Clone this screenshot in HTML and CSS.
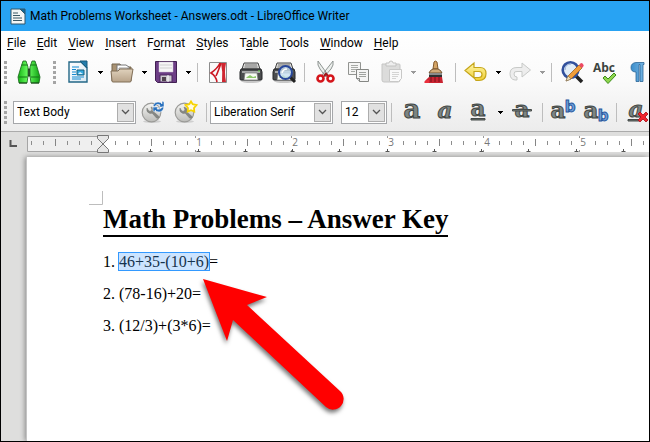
FILE: index.html
```html
<!DOCTYPE html>
<html lang="en">
<head>
<meta charset="utf-8">
<title>Math Problems Worksheet - Answers.odt - LibreOffice Writer</title>
<link rel="stylesheet" href="styles.css">
</head>
<body>
<svg class="defs" width="0" height="0" aria-hidden="true">
  <defs>
    <linearGradient id="green" x1="0" x2="1" y1="0" y2="0"><stop offset="0" stop-color="#16b516"/><stop offset=".45" stop-color="#6cff62"/><stop offset="1" stop-color="#0f9f12"/></linearGradient>
    <linearGradient id="paper" x1="0" x2="1" y1="0" y2="1"><stop offset="0" stop-color="#fff"/><stop offset="1" stop-color="#d9e9f3"/></linearGradient>
    <linearGradient id="tan" x1="0" x2="0" y1="0" y2="1"><stop offset="0" stop-color="#e0d2bd"/><stop offset="1" stop-color="#b8a389"/></linearGradient>
    <linearGradient id="gold" x1="0" x2="0" y1="0" y2="1"><stop offset="0" stop-color="#fff6a8"/><stop offset="1" stop-color="#f0cf35"/></linearGradient>
    <linearGradient id="metal" x1="0" x2="0" y1="0" y2="1"><stop offset="0" stop-color="#f6f6f4"/><stop offset="1" stop-color="#bcbcb9"/></linearGradient>
    <linearGradient id="pilcrow" x1="0" x2="1" y1="0" y2="0"><stop offset="0" stop-color="#3b8dcb"/><stop offset="1" stop-color="#77b6e3"/></linearGradient>
    <symbol id="caret" viewBox="0 0 5 3"><path d="M0 0h5v1H4v1H3v1H2V2H1V1H0z" fill="currentColor"/></symbol>
    <symbol id="chevron" viewBox="0 0 9 6"><path d="M1 1l3.500 3.500L8 1" fill="none" stroke="#555" stroke-width="1.300"/></symbol>
    <symbol id="printer" viewBox="0 0 24 24">
      <ellipse cx="12" cy="21" rx="10" ry="2" fill="#0003"/>
      <path d="M5 3h14l2 6H3z" fill="#dadad8" stroke="#444"/><path d="M6 5h12M5.500 7h13" stroke="#777"/>
      <path d="M2 9h20l1 3v7q0 1-1 1H2q-1 0-1-1v-7z" fill="#4b4d4e" stroke="#252628"/>
      <path d="M3 11h18v2H3z" fill="#a7a9a9"/><path d="M6 13h12l1 7H5z" fill="#f8fbf5" stroke="#777" stroke-width=".7"/>
      <path d="M8 17l3-2 3 2 3-1v2H7z" fill="#8ec96c"/><path d="M19 11h2" stroke="#6fe04c"/>
    </symbol>
    <symbol id="wrench" viewBox="0 0 24 24">
      <ellipse cx="11" cy="21.500" rx="9" ry="1.500" fill="#0002"/>
      <circle cx="10.500" cy="12.500" r="9.300" fill="url(#metal)" stroke="#9b9b98" stroke-width="1.200"/>
      <path d="M6 8q-1 4 2 5 2 1 3 0l4.500 5q2 1 3-1L13 12q1-4-3-5l1 3-2 1.500-2-1.500z" fill="#858783" stroke="#767874" stroke-width=".5"/>
    </symbol>
  </defs>
</svg>

<main class="window">
  <header class="titlebar">
    <svg width="16" height="17" viewBox="0 0 16 17" aria-hidden="true"><path d="M1 1h9l5 5v10H1z" fill="#f4f6f5" stroke="#31566a"/><path d="M10 1h5v5z" fill="#116d9e" stroke="#31566a"/><path d="M3 5h5M3 7.500h7M3 10h9M3 12.500h9" stroke="#3c5965" stroke-width="1.200"/></svg>
    <h1>Math Problems Worksheet - Answers.odt - LibreOffice Writer</h1>
  </header>

  <div class="chrome">
    <nav class="menu" aria-label="Main menu">
      <button><u>F</u>ile</button><button><u>E</u>dit</button><button><u>V</u>iew</button><button><u>I</u>nsert</button><button>F<u>o</u>rmat</button><button><u>S</u>tyles</button><button>T<u>a</u>ble</button><button><u>T</u>ools</button><button><u>W</u>indow</button><button><u>H</u>elp</button>
    </nav>

    <div class="toolbar" role="toolbar" aria-label="Standard">
      <span class="grip"></span>
      <button class="tool" aria-label="Find"><svg viewBox="0 0 24 24"><path d="M9 9h6v7H9z" fill="#3b433b" stroke="#1d271d"/><path d="M5 4l1-3h3l1 3 1 3v9l-1 7H2l-1-6L4 7zM14 4l1-3h3l1 3 1 3 3 10-1 6h-8l-1-7V7z" fill="url(#green)" stroke="#176519" stroke-width=".8"/><path d="M4.500 5h6M13.500 5h6M2 17h8M14 17h8" stroke="#157617"/><path d="M2 23h8M14 23h8" stroke="#164716"/></svg></button>
      <span class="grip"></span>
      <div class="split"><button class="tool" aria-label="New"><svg viewBox="0 0 24 24"><path d="M3 2h12l6 6v14H3z" fill="url(#paper)" stroke="#236786" stroke-width="1.400"/><path d="M14 1h7v7z" fill="#237cab" stroke="#175b7c"/><path d="M6 7h7M6 9.500h4M6 12h4M6 14.500h4M6 17h12M6 19h9" stroke="#168bd2" stroke-width="1.200"/><path d="M11 10h7v5h-7z" fill="#35a9df" stroke="#17617f"/><path d="M12 14l2-2 3 2z" fill="#dff3ff"/></svg></button><button class="drop" aria-label="New options"><svg><use href="#caret"/></svg></button></div>
      <div class="split"><button class="tool" aria-label="Open"><svg viewBox="0 0 24 24"><path d="M2 4h8l2 3h9v14H2z" fill="#a99273" stroke="#75644d"/><path d="M7 5h9l3 2v5H7z" fill="#fff" stroke="#777"/><path d="M9 8h9v4H9z" fill="#eee" stroke="#777" stroke-width=".7"/><path d="M1 11h7l2-2h13l-2 12q0 1-1 1H3q-1 0-1-1z" fill="url(#tan)" stroke="#806e57"/></svg></button><button class="drop" aria-label="Open options"><svg><use href="#caret"/></svg></button></div>
      <div class="split"><button class="tool" aria-label="Save"><svg viewBox="0 0 24 24"><path d="M1.500 1.500h21v21h-19l-2-2z" fill="#6d3e86" stroke="#412052"/><path d="M5 2h14v10H5z" fill="#f6f5f6" stroke="#c9bdd0" stroke-width=".5"/><path d="M6 5h12M6 8h12" stroke="#cfcfcf"/><path d="M6 15h12v7H6z" fill="#ccc9cf" stroke="#4d265f"/><path d="M8 17h4v4H8z" fill="#51434f"/><path d="M14 15v7" stroke="#fff"/></svg></button><button class="drop" aria-label="Save options"><svg><use href="#caret"/></svg></button></div>
      <span class="sep"></span>
      <button class="tool" aria-label="Export as PDF"><svg viewBox="0 0 24 24"><path d="M3.500 2.500h17v20h-17z" fill="#fafafa" stroke="#8c8c8c"/><path d="M14 3q-2 5-9 10 5 3 6 9M15 3q-3 9-5 13" fill="none" stroke="#cc1823" stroke-width="1.600"/><path d="M15 3h5q-2 9 0 19h-4q1-10-1-19z" fill="#cf2630"/></svg></button>
      <button class="tool" aria-label="Print"><svg><use href="#printer"/></svg></button>
      <button class="tool" aria-label="Print preview"><svg viewBox="0 0 24 24"><use href="#printer" width="24" height="24"/><path d="M18 17l5 5" stroke="#222" stroke-width="3"/><circle cx="13.500" cy="12.500" r="6.500" fill="#c8e1f4cc" stroke="#28479b" stroke-width="2"/><path d="M10 13q1-4 5-4" fill="none" stroke="#fff" stroke-width="1.500"/></svg></button>
      <span class="sep"></span>
      <button class="tool" aria-label="Cut"><svg viewBox="0 0 24 24"><path d="M5 1q-1 4 2 8l6 8 2-2zM20 1q1 4-2 8l-7 8-2-2z" fill="#ecefed" stroke="#858b88" stroke-width=".9"/><circle cx="12.500" cy="13.500" r="1" fill="#666"/><path d="M11 16l2-2 2 2" stroke="#a31318" stroke-width="2" fill="none"/><ellipse cx="7.500" cy="18.500" rx="3" ry="3" fill="#fff" stroke="#d5161c" stroke-width="2.600"/><ellipse cx="17.500" cy="18.500" rx="3" ry="3" fill="#fff" stroke="#d5161c" stroke-width="2.600"/></svg></button>
      <button class="tool" aria-label="Copy"><svg viewBox="0 0 24 24"><path d="M2.500 2.500h12v12h-12z" fill="#f5f5f4" stroke="#929491"/><path d="M5 5.500h7M5 7.500h7M5 9.500h7M5 11.500h4" stroke="#a7aaa6"/><path d="M10.500 9.500h12v12h-9l-3-3z" fill="#f5f5f4" stroke="#858784"/><path d="M13 12.500h7M13 14.500h7M13 16.500h7" stroke="#a0a39f"/><path d="M10.500 18.500h3v3" fill="#ddd" stroke="#858784"/></svg></button>
      <div class="split"><button class="tool" aria-label="Paste" disabled><svg viewBox="0 0 24 24"><path d="M3 4h17q1 0 1 1v15q0 2-2 2H5q-2 0-2-2z" fill="#dcdcdb" stroke="#c6c6c5"/><path d="M7 6V3h3q0-2 2-2t2 2h3v3z" fill="#eee" stroke="#c2c2c1"/><path d="M10.500 9.500h12v9l-3 3h-9z" fill="#fafafa" stroke="#c8c8c7"/><path d="M13 12.500h7M13 14.500h7M13 16.500h6M13 18.500h4" stroke="#d5d5d4"/></svg></button><button class="drop muted" aria-label="Paste options"><svg><use href="#caret"/></svg></button></div>
      <button class="tool" aria-label="Clone formatting"><svg viewBox="0 0 24 24"><path d="M10 9l1-7q1-2 3 0l1 7z" fill="#d5a566" stroke="#83592b"/><path d="M6 13q1-3 4-4h5q3 1 4 4z" fill="#d2ab78" stroke="#72522f"/><path d="M6 13h13v4H6z" fill="#2f3131"/><path d="M6 14h13" stroke="#e5e5e5"/><path d="M6 17h13l1 6H2q-1-2 4-6z" fill="#c92331"/><path d="M8 17v5M12 17v5M16 17v5" stroke="#74131c"/><path d="M1 22q3-3 5-2v3H2z" fill="#ea2f3c"/></svg></button>
      <span class="sep"></span>
      <div class="split"><button class="tool" aria-label="Undo"><svg viewBox="0 0 24 24"><path d="M1 10.500L10 3v4.500h6q6 0 6 6 0 7-7 7h-3l-2-3h5q3 0 3-3t-3-3h-5V18z" fill="url(#gold)" stroke="#c5a519" stroke-width="1.200"/></svg></button><button class="drop" aria-label="Undo history"><svg><use href="#caret"/></svg></button></div>
      <div class="split"><button class="tool" aria-label="Redo" disabled><svg viewBox="0 0 24 24"><path d="M22.500 10L14 3v4.500H9q-7 0-7 6 0 6 5 6.500h2v-3q-3 0-3-3t3-2.500h5V17z" fill="#ededed" stroke="#c7c9c7"/></svg></button><button class="drop muted" aria-label="Redo history"><svg><use href="#caret"/></svg></button></div>
      <span class="sep"></span>
      <button class="tool" aria-label="Find and replace"><svg viewBox="0 0 24 24"><path d="M16 16l6 6" stroke="#222" stroke-width="3.500"/><circle cx="10.500" cy="10" r="7.800" fill="#e1edf7" stroke="#31509c" stroke-width="2.600"/><path d="M5 10q0-6 6-6" fill="none" stroke="#8ea6d4"/><path d="M6 21l2-5L19 5l3 3-11 11z" fill="#ef9d3b" stroke="#9b6228" stroke-width=".8"/><path d="M19 5l1.500-1.500q1-1 2.500.500t0 3L22 8z" fill="#ed4963"/><path d="M6 21l2-5 3 3z" fill="#efdfbc" stroke="#665" stroke-width=".5"/></svg></button>
      <button class="tool" aria-label="Spelling"><svg viewBox="0 0 24 24"><text x="0" y="12" class="abc">Abc</text><path d="M10 18l2-2 3 3 6-6 2 2-8 8.500z" fill="#8ed64e" stroke="#3c8d1b"/></svg></button>
      <button class="tool" aria-label="Formatting marks"><svg viewBox="0 0 24 24"><path d="M10 2.500h8v2h-1v17h-3v-17h-1v17h-3V12Q5 12 5 7.500t5-5z" fill="url(#pilcrow)" stroke="#2b6697" stroke-width=".8"/></svg></button>
    </div>

    <div class="toolbar formatting" role="toolbar" aria-label="Formatting">
      <span class="grip"></span>
      <div class="combo"><select aria-label="Paragraph style"><option>Text Body</option></select><span class="arrow"><svg><use href="#chevron"/></svg></span></div>
      <button class="tool" aria-label="Update style"><svg viewBox="0 0 24 24"><use href="#wrench" width="24" height="24"/><path d="M12 6q1-4 5-4 3 0 4 2V1l2 1v5h-5l1-2q-4-2-5 2zM23 7q-1 5-5 5-3 0-4-2v2l-2-1V7h5l-1 2q4 1 5-2z" fill="#2870bd" stroke="#fff" stroke-width=".5"/></svg></button>
      <button class="tool" aria-label="New style"><svg viewBox="0 0 24 24"><use href="#wrench" width="24" height="24"/><path d="M17 1.500l1.700 2.700 3.800.8-2.500 3 .3 3.600L17 10.200l-3.300 1.400L14 8l-2.500-3 3.800-.8z" fill="#fffbe2" stroke="#f7d300" stroke-width="1.800"/></svg></button>
      <span class="sep"></span>
      <div class="combo"><select aria-label="Font name"><option>Liberation Serif</option></select><span class="arrow"><svg><use href="#chevron"/></svg></span></div>
      <div class="combo size"><select aria-label="Font size"><option>12</option></select><span class="arrow"><svg><use href="#chevron"/></svg></span></div>
      <span class="sep"></span>
      <button class="tool" aria-label="Bold"><svg viewBox="0 0 24 24"><text x="12" y="18" class="glyph heavy">a</text></svg></button>
      <button class="tool" aria-label="Italic"><svg viewBox="0 0 24 24"><text x="12" y="18" class="glyph slant">a</text></svg></button>
      <div class="split"><button class="tool" aria-label="Underline"><svg viewBox="0 0 24 24"><text x="12" y="16" class="glyph">a</text><path d="M5 18.500h14v1.500H5z" fill="#6c7471" stroke="#454a48"/></svg></button><button class="drop" aria-label="Underline options"><svg><use href="#caret"/></svg></button></div>
      <button class="tool" aria-label="Strikethrough"><svg viewBox="0 0 24 24"><text x="12" y="17" class="glyph">a</text><path d="M2.500 9.500h19v1.500h-19z" fill="#7c8380" stroke="#454a48"/></svg></button>
      <span class="sep"></span>
      <button class="tool" aria-label="Superscript"><svg viewBox="0 0 24 24"><text x="7" y="18" class="glyph">a</text><text x="19" y="12" class="mini">b</text></svg></button>
      <button class="tool" aria-label="Subscript"><svg viewBox="0 0 24 24"><text x="7" y="18" class="glyph">a</text><text x="19" y="21" class="mini">b</text></svg></button>
      <span class="sep"></span>
      <button class="tool" aria-label="Clear formatting"><svg viewBox="0 0 24 24"><text x="11" y="17" class="glyph slant">a</text><path d="M3 19.500h11v1.500H3z" fill="#6c7471" stroke="#454a48"/><path d="M13 14l2-2 3 3 3-3 2 2-3 3 3 3-2 2-3-3-3 3-2-2 3-3z" fill="#f0252d" stroke="#a50f16" stroke-width=".8"/></svg></button>
    </div>
  </div>

  <section class="workspace">
    <div class="rulerbar">
      <svg class="tabtype" width="8" height="8" aria-hidden="true"><path d="M1.500 0v6H8" fill="none" stroke="#555" stroke-width="2"/></svg>
      <div class="ruler">
        <svg width="100%" height="16">
          <defs>
            <pattern id="minor" width="12" height="16" patternUnits="userSpaceOnUse" x="4"><path d="M0 5h1v4H0z" fill="#8d8d8d"/></pattern>
            <pattern id="half" width="96" height="16" patternUnits="userSpaceOnUse" x="28"><path d="M0 3h1v7H0z" fill="#858585"/></pattern>
            <pattern id="inch" width="96" height="16" patternUnits="userSpaceOnUse" x="70"><path d="M0 2h8v12H0z" fill="#fff"/><path d="M2 0h1v2H2zM2 14h1v2H2z" fill="#999"/></pattern>
          </defs>
          <rect width="100%" height="16" fill="#fff"/>
          <rect width="76" height="16" fill="#efefef"/><path d="M76 .5H.5v15H76" fill="none" stroke="#a5a5a5"/>
          <rect width="100%" height="16" fill="url(#minor)"/><rect width="100%" height="16" fill="url(#half)"/>
          <rect x="100" width="100%" height="16" fill="url(#inch)"/>
          <g class="numbers"><text x="172" y="10">1</text><text x="268" y="10">2</text><text x="364" y="10">3</text><text x="460" y="10">4</text><text x="556" y="10">5</text></g>
          <path d="M123.500 13v2m-2 .5h4M171.500 13v2m-2 .5h4M218.500 13v2m-2 .5h4M265.500 13v2m-2 .5h4M312.500 13v2m-2 .5h4M360.500 13v2m-2 .5h4M407.500 13v2m-2 .5h4M454.500 13v2m-2 .5h4M501.500 13v2m-2 .5h4M549.500 13v2m-2 .5h4M596.500 13v2m-2 .5h4" stroke="#555" fill="none"/>
        </svg>
        <svg class="indent" width="12" height="18" viewBox="0 0 12 18"><path d="M.5.5h11v3L6 9 .5 3.500zM6 9l5.500 5.500v3H.5v-3z" fill="#e6e6e6" stroke="#777"/></svg>
      </div>
    </div>

    <article class="page">
      <svg class="corner" width="14" height="14" aria-hidden="true"><path d="M13.500 0v13.500H0" fill="none" stroke="#bdbdbd"/></svg>
      <h2>Math Problems – Answer Key</h2>
      <p>1. <mark>46+35-(10+6)</mark>=</p>
      <p>2. (78-16)+20=</p>
      <p>3. (12/3)+(3*6)=</p>
      <svg class="pointer" width="160" height="150" viewBox="0 0 160 150" aria-hidden="true"><path d="M3 2L67 20 47 28 140 114A10.500 10.500 0 0 1 126 130L33 43 27 64z" fill="#f00"/></svg>
    </article>
  </section>
</main>
</body>
</html>
```
FILE: styles.css
```css
* { box-sizing: border-box; }
body {
  margin: 0;
  font: 12px/16px Roboto, sans-serif;
  color: #000;
}
.defs { position: absolute; }
button {
  padding: 0;
  border: 0;
  background: none;
  font: inherit;
  color: inherit;
}
svg { display: block; flex: none; }

.window {
  display: flex;
  flex-direction: column;
  min-height: 100vh;
  border: 1px solid #000;
  overflow: hidden;
}
.titlebar {
  display: flex;
  align-items: center;
  gap: 4px;
  height: 30px;
  padding-left: 9px;
  background: #28a3f3;
}
.titlebar h1 {
  margin: 0;
  font-size: 12px;
  font-weight: 400;
  white-space: nowrap;
}

.chrome {
  background: linear-gradient(#fff, #fafafa 50%, #ececec);
  border-bottom: 1px solid #ababab;
}
.menu {
  display: flex;
  gap: 11px;
  height: 24px;
  align-items: center;
  padding-left: 6px;
}
.menu u { text-underline-offset: 2px; }

.toolbar {
  display: flex;
  align-items: center;
  height: 36px;
  padding-bottom: 2px;
}
.formatting { height: 40px; padding: 2px 0 0; }
.grip {
  flex: none;
  width: 3px;
  height: 23px;
  margin: 0 10px 0 3px;
  background: repeating-linear-gradient(#a5a5a5 0 3px, transparent 3px 5px);
}
.formatting .grip { margin-right: 6px; }
.tool {
  flex: none;
  width: 24px;
  height: 24px;
  margin-right: 9px;
}
.tool svg { width: 24px; height: 24px; overflow: visible; }
.split { display: flex; flex: none; }
.split .tool { margin-right: 0; }
.drop {
  display: grid;
  place-items: center;
  width: 20px;
  height: 24px;
}
.drop svg { width: 5px; height: 3px; }
.muted { color: #999; }
.sep {
  flex: none;
  width: 1px;
  height: 19px;
  margin: 0 8px 0 -1px;
  background: #bdbdbd;
}

.combo {
  display: flex;
  flex: none;
  width: 123px;
  height: 23px;
  margin-right: 5px;
  border: 1px solid #a5a7aa;
  background: #fff;
}
.combo.size { width: 46px; margin-left: 3px; }
.sep + .combo { margin-left: -5px; }
.combo select {
  flex: 1;
  min-width: 0;
  padding: 0 0 0 3px;
  border: 0;
  appearance: none;
  background: none;
  font: inherit;
  color: #000;
}
.arrow {
  display: grid;
  place-items: center;
  width: 17px;
  margin: 1px;
  border: 1px solid #adadad;
  background: #e1e1e1;
}
.arrow svg { width: 9px; height: 6px; }

.abc { font: 700 12px/12px "Open Sans", sans-serif; fill: #3b4440; }
.glyph {
  font: 700 23px/23px "DejaVu Serif", serif;
  text-anchor: middle;
  fill: #7d8582;
  stroke: #404543;
  stroke-width: 1px;
}
.heavy { font-size: 26px; }
.slant { font-style: italic; }
.mini {
  font: 700 15px/15px "DejaVu Sans", sans-serif;
  text-anchor: middle;
  fill: #6ea0da;
  stroke: #27569b;
  stroke-width: 1px;
}

.workspace {
  display: flex;
  flex: 1;
  flex-direction: column;
  gap: 5px;
  padding-top: 4px;
  background: #dededd;
}
.rulerbar { display: flex; }
.tabtype { margin: 4px 10px 0 8px; }
.ruler { position: relative; flex: 1; min-width: 0; }
.numbers {
  font: 10px "Open Sans", sans-serif;
  text-anchor: middle;
  fill: #777;
}
.indent { position: absolute; left: 70px; top: -1px; }

.page {
  position: relative;
  flex: 1;
  margin-left: 26px;
  padding: 34px 16px 0 76px;
  background: #fff;
  box-shadow: -1px 0 #c4c4c4, -2px 0 5px #888;
  font: 16px/20px "Liberation Serif", serif;
}
.page h2 {
  width: fit-content;
  margin: 0 0 15px;
  border-bottom: 2px solid #000;
  font-size: 27px;
  line-height: 31px;
}
.page p { margin: 0 0 12px; }
.page mark {
  background: #cce4ff;
  color: #16334d;
  outline: 1px solid #39f;
}
.corner { margin: 0 0 -1px -14px; }
.pointer {
  position: absolute;
  left: 173px;
  top: 120px;
  overflow: visible;
  filter: drop-shadow(-1px 3px 2px #0008);
}
```
